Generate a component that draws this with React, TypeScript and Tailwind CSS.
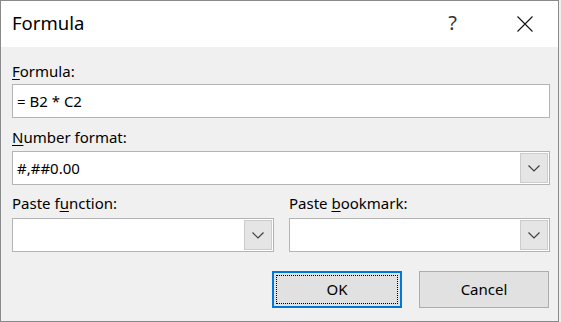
import React from "react";

const font = { fontFamily: '"Segoe UI", "Noto Sans", "Liberation Sans", sans-serif' };

function Chevron() {
  return (
    <svg width="12" height="7" viewBox="0 0 12 7" className="block">
      <path d="M0.5 0.5 L6 6 L11.5 0.5" fill="none" stroke="#404040" strokeWidth="1.2" />
    </svg>
  );
}

function Combo({ value, className }: { value?: string; className?: string }) {
  return (
    <div className={`flex h-[34px] items-stretch border border-[#b4b4b4] bg-white p-[1px] ${className ?? ""}`}>
      <div className="flex flex-1 items-center pl-[3px] text-[15px] text-black">{value}</div>
      <div className="flex w-[28px] items-center justify-center border border-[#cccccc] bg-[#e5e5e5]">
        <Chevron />
      </div>
    </div>
  );
}

export default function App() {
  return (
    <div className="h-[322px] w-[561px] bg-[#f0f0f0]" style={font}>
      <div className="flex h-[322px] w-[559px] flex-col border border-[#8a8a8a] bg-[#f0f0f0]">
        <div className="flex h-[46px] items-center bg-white pl-[11px] text-black">
          <div className="flex-1 pb-[2px] text-[18.5px] leading-none">Formula</div>
          <div className="mr-[60px] pb-[2px] text-[20px] leading-none text-[#333]">?</div>
          <svg width="16" height="16" viewBox="0 0 16 16" className="mr-[25px] mb-[1px]">
            <path d="M0.5 0.5 L15.5 15.5 M15.5 0.5 L0.5 15.5" stroke="#111" strokeWidth="1.1" />
          </svg>
        </div>
        <div className="flex flex-1 flex-col pl-[11px] pr-[8px] pt-[14px] text-[15px] text-black">
          <div className="h-[23px] leading-[20px]">
            <span className="underline underline-offset-2">F</span>ormula:
          </div>
          <div className="flex h-[34px] items-center border border-[#b4b4b4] bg-white pl-[4px]">= B2 * C2</div>
          <div className="mt-[9px] h-[24px] leading-[20px]">
            <span className="underline underline-offset-2">N</span>umber format:
          </div>
          <Combo value="#,##0.00" />
          <div className="mt-[8px] flex gap-[15px]">
            <div className="flex w-[262px] flex-col">
              <div className="h-[25px] leading-[20px]">
                Paste f<span className="underline underline-offset-2">u</span>nction:
              </div>
              <Combo />
            </div>
            <div className="flex flex-1 flex-col">
              <div className="h-[25px] leading-[20px]">
                Paste <span className="underline underline-offset-2">b</span>ookmark:
              </div>
              <Combo />
            </div>
          </div>
          <div className="mt-[19px] flex justify-end gap-[17px] pr-[1px]">
            <div className="flex h-[37px] w-[130px] items-center justify-center border-2 border-[#0078d7] bg-[#e1e1e1] p-[2px]">
              <div className="flex h-full w-full items-center justify-center border border-dotted border-black">OK</div>
            </div>
            <div className="flex h-[37px] w-[130px] items-center justify-center border border-[#adadad] bg-[#e1e1e1]">Cancel</div>
          </div>
        </div>
      </div>
    </div>
  );
}
